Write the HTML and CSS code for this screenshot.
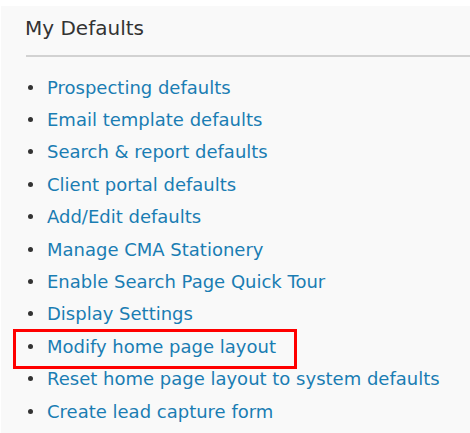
FILE: index.html
```
<!DOCTYPE html>
<html>
<head>
<meta charset="utf-8">
<link rel="stylesheet" href="styles.css">
</head>
<body>
<div class="panel">
  <h2 class="title">My Defaults</h2>
  <div class="rule"></div>
  <ul class="links">
    <li><a href="#">Prospecting defaults</a></li>
    <li><a href="#">Email template defaults</a></li>
    <li><a href="#">Search &amp; report defaults</a></li>
    <li><a href="#">Client portal defaults</a></li>
    <li><a href="#">Add/Edit defaults</a></li>
    <li><a href="#">Manage CMA Stationery</a></li>
    <li><a href="#">Enable Search Page Quick Tour</a></li>
    <li><a href="#">Display Settings</a></li>
    <li class="highlight"><a href="#">Modify home page layout</a></li>
    <li><a href="#">Reset home page layout to system defaults</a></li>
    <li><a href="#">Create lead capture form</a></li>
  </ul>
</div>
</body>
</html>
```
FILE: styles.css
```
html, body {
  margin: 0;
  padding: 0;
  background: #ffffff;
}
body {
  font-family: "DejaVu Sans", Verdana, sans-serif;
  height: 433px;
  overflow: hidden;
}
.panel {
  margin: 6px 0 0 1px;
  padding-left: 24px;
  background: #f9f9f9;
  height: 427px;
}
.title {
  margin: 0;
  padding-top: 9px;
  font-size: 20px;
  font-weight: normal;
  color: #333333;
  line-height: 26px;
}
.rule {
  margin-top: 14px;
  height: 2px;
  background: #d2d2d2;
  margin-left: 1px;
}
.links {
  list-style: none;
  margin: 14px 0 0 0;
  padding: 0;
}
.links li {
  display: flex;
  align-items: center;
  height: 32.4px;
  position: relative;
}
.links li::before {
  content: "";
  width: 5px;
  height: 5px;
  border-radius: 50%;
  background: #333333;
  margin: 0 14px 0 3px;
  flex: none;
}
.links a {
  color: #1a7db3;
  text-decoration: none;
  font-size: 18px;
}
.highlight::after {
  content: "";
  position: absolute;
  left: -12px;
  top: -1px;
  width: 278px;
  height: 34px;
  border: 3px solid #ff0000;
}
```
